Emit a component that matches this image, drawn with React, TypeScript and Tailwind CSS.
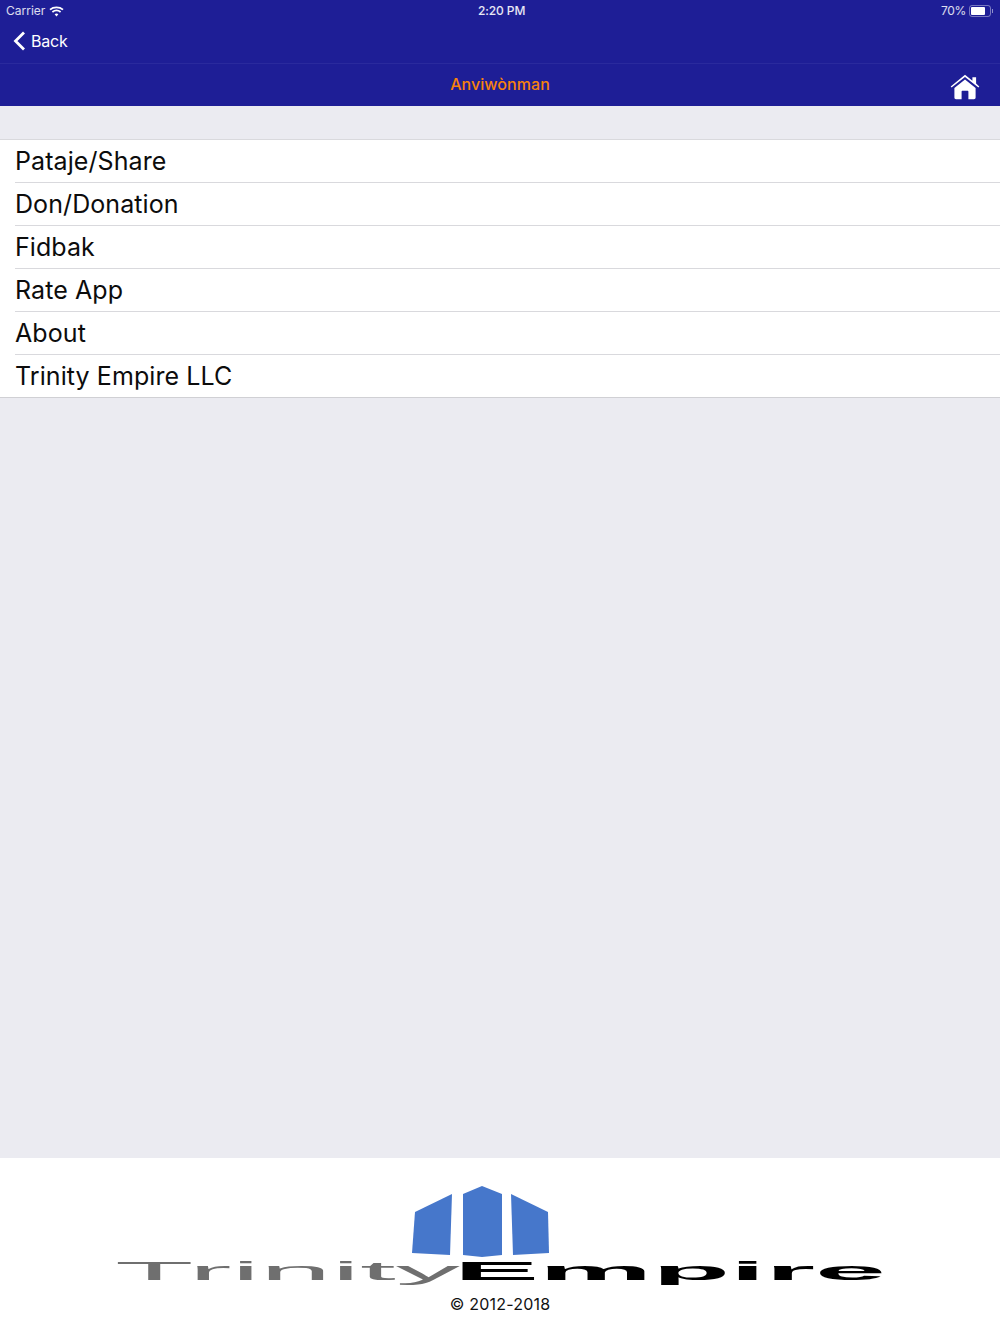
const menuItems = ["Pataje/Share", "Don/Donation", "Fidbak", "Rate App", "About", "Trinity Empire LLC"];

function WifiIcon() {
  return (
    <svg width="15" height="11" viewBox="0 0 15 11" className="block" fill="none" stroke="#fff">
      <path d="M1 3.6C4.6.6 10.4.6 14 3.6" strokeWidth="1.8" />
      <path d="M3.4 6C5.8 4.1 9.2 4.1 11.6 6" strokeWidth="1.8" />
      <path d="M5.6 8.2 7.5 10.4 9.4 8.2C8.3 7.3 6.7 7.3 5.6 8.2Z" fill="#fff" stroke="none" />
    </svg>
  );
}

function BatteryIcon() {
  return (
    <div className="flex items-center">
      <div className="flex h-[12px] w-[22px] items-center rounded-[3px] border border-white/40 p-[1px]">
        <div className="h-full w-[14px] rounded-[1px] bg-white" />
      </div>
      <div className="ml-[1px] h-[4px] w-[1px] bg-white/50" />
    </div>
  );
}

function HomeIcon() {
  return (
    <svg width="30" height="26" viewBox="0 0 30 26" className="block" fill="#fff">
      <path d="M15 3 1.6 13.6l-.9-1.2L15 .8l7.4 5.9V3.2h3.7v6.4l3.2 2.8-.9 1.2Z" />
      <path d="M15 5.4 4.4 14v9.6c0 1 .7 1.6 1.6 1.6h5.6v-7.4c0-.6.4-1 1-1h4.8c.6 0 1 .4 1 1v7.4H24c.9 0 1.6-.6 1.6-1.6V14Z" />
    </svg>
  );
}

function TrinityLogo() {
  return (
    <svg width="800" height="110" viewBox="100 1180 800 110" className="block blur-[0.5px]">
      <g fill="#4677cb">
        <polygon points="415,1212 452,1194 450,1255 412,1253" />
        <polygon points="463,1194 482,1186 502,1194 502,1255 482,1257 463,1255" />
        <polygon points="511,1194 548,1212 549,1253 513,1255" />
      </g>
      <text
        x="115"
        y="1280"
        fontFamily="'Liberation Sans', Arial, sans-serif"
        fontSize="25"
        fill="#6f6f6f"
        textLength="345"
        lengthAdjust="spacingAndGlyphs"
      >
        Trinity
      </text>
      <text
        x="454"
        y="1280"
        fontFamily="'Liberation Sans', Arial, sans-serif"
        fontSize="25"
        fontWeight="700"
        fill="#000"
        textLength="432"
        lengthAdjust="spacingAndGlyphs"
      >
        Empire
      </text>
    </svg>
  );
}

export default function App() {
  return (
    <div className="flex h-[1334px] w-[1000px] flex-col overflow-hidden bg-[#ebebf1] font-['Inter',sans-serif]">
      <header className="bg-[#1e1e96] text-white">
        <div className="border-b border-[#2a2a9d]">
          <div className="flex h-[20px] items-center justify-between pl-[6px] pr-[7px] pt-[2px] text-[12px] leading-none">
            <div className="flex items-center gap-[4px] text-white/85">
              <span>Carrier</span>
              <WifiIcon />
            </div>
            <span className="mr-[2px] font-medium tracking-[-0.1px] text-white/90">2:20 PM</span>
            <div className="flex items-center gap-[3px] text-white/85">
              <span className="tracking-[-0.3px]">70%</span>
              <BatteryIcon />
            </div>
          </div>
          <div className="flex h-[43px] items-center pb-[2px] pl-[13px]">
            <svg width="13" height="20" viewBox="0 0 13 20" fill="none" stroke="#fff" strokeWidth="2.8" className="block">
              <path d="M11 1.5 2.5 10 11 18.5" />
            </svg>
            <span className="ml-[5px] text-[16px] leading-none tracking-[-0.2px]">Back</span>
          </div>
        </div>
        <div className="relative flex h-[42px] items-center justify-center pb-[2px]">
          <span className="text-[16px] font-medium leading-none tracking-[0.05px] text-[#f7820c]">Anviwònman</span>
          <div className="absolute right-[20px] top-[10px]">
            <HomeIcon />
          </div>
        </div>
      </header>

      <main className="flex-1 pt-[33px]">
        <ul className="border-t border-[#d9d9dd] bg-white">
          {menuItems.map((item, i) => (
            <li key={item} className="pl-[15px]">
              <div
                className={`flex items-center text-[25px] leading-none tracking-[0.08px] text-[#0c0c0c] ${
                  i < menuItems.length - 1 ? "h-[43px] border-b border-[#d9d9dd]" : "h-[42px]"
                }`}
              >
                {item}
              </div>
            </li>
          ))}
        </ul>
        <div className="h-px bg-[#d0d0d4]" />
      </main>

      <footer className="flex h-[176px] flex-col items-center bg-white pt-[22px]">
        <TrinityLogo />
        <p className="mt-[4px] text-[16px] leading-[20px] tracking-[0.2px] text-[#111]">© 2012-2018</p>
      </footer>
    </div>
  );
}
